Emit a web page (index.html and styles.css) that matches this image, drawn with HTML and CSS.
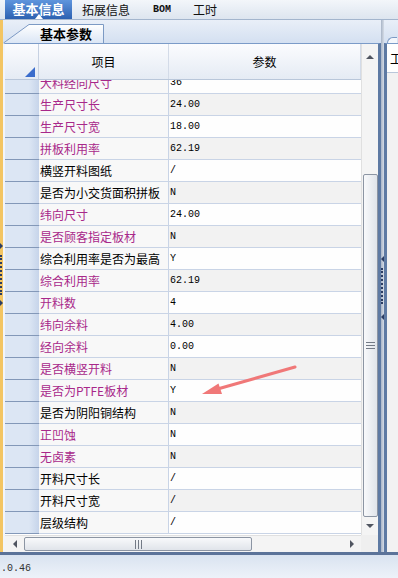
FILE: index.html
```html
<!DOCTYPE html>
<html lang="zh">
<head>
  <meta charset="UTF-8" />
  <title>基本信息</title>
  <link rel="stylesheet" href="styles.css">
</head>
<body>

  <!-- top tabs -->
  <div class="tabbar">
    <div class="tab active">基本信息</div>
    <div class="tab">拓展信息</div>
    <div class="tab bom">BOM</div>
    <div class="tab">工时</div>
  </div>

  <div class="main">
    <div class="edge">
      <span class="tri-r"></span>
      <span class="dots"></span>
      <span class="tri-r"></span>
    </div>

    <div class="panel">
      <div class="subtabs">
        <div class="subtab">
          <svg width="101" height="20" viewBox="0 0 101 20">
            <defs>
              <linearGradient id="tabg" x1="0" y1="0" x2="0" y2="1">
                <stop offset="0" stop-color="#ffffff"/>
                <stop offset="1" stop-color="#dbe6f5"/>
              </linearGradient>
            </defs>
            <path d="M0.5 20 L26 1.5 L100.5 1.5 L100.5 20" fill="url(#tabg)" stroke="#7c9ac4"/>
          </svg>
          <span>基本参数</span>
        </div>
      </div>

      <div class="grid">
        <div class="upper">
          <div class="table">
            <div class="head">
              <div class="sel"><span class="corner-tri"></span></div>
              <div class="hcell">项目</div>
              <div class="hcell">参数</div>
            </div>
            <div class="rows">
              <div class="row"><div class="sel"></div><div class="item hl">大料经向尺寸</div><div class="val">36</div></div>
              <div class="row"><div class="sel"></div><div class="item hl">生产尺寸长</div><div class="val">24.00</div></div>
              <div class="row"><div class="sel"></div><div class="item hl">生产尺寸宽</div><div class="val">18.00</div></div>
              <div class="row"><div class="sel"></div><div class="item hl">拼板利用率</div><div class="val">62.19</div></div>
              <div class="row"><div class="sel"></div><div class="item">横竖开料图纸</div><div class="val">/</div></div>
              <div class="row"><div class="sel"></div><div class="item">是否为小交货面积拼板</div><div class="val">N</div></div>
              <div class="row"><div class="sel"></div><div class="item hl">纬向尺寸</div><div class="val">24.00</div></div>
              <div class="row"><div class="sel"></div><div class="item hl">是否顾客指定板材</div><div class="val">N</div></div>
              <div class="row"><div class="sel"></div><div class="item">综合利用率是否为最高</div><div class="val">Y</div></div>
              <div class="row"><div class="sel"></div><div class="item hl">综合利用率</div><div class="val">62.19</div></div>
              <div class="row"><div class="sel"></div><div class="item hl">开料数</div><div class="val">4</div></div>
              <div class="row"><div class="sel"></div><div class="item hl">纬向余料</div><div class="val">4.00</div></div>
              <div class="row"><div class="sel"></div><div class="item hl">经向余料</div><div class="val">0.00</div></div>
              <div class="row"><div class="sel"></div><div class="item hl">是否横竖开料</div><div class="val">N</div></div>
              <div class="row"><div class="sel"></div><div class="item hl">是否为PTFE板材</div><div class="val">Y</div></div>
              <div class="row"><div class="sel"></div><div class="item">是否为阴阳铜结构</div><div class="val">N</div></div>
              <div class="row"><div class="sel"></div><div class="item hl">正凹蚀</div><div class="val">N</div></div>
              <div class="row"><div class="sel"></div><div class="item hl">无卤素</div><div class="val">N</div></div>
              <div class="row"><div class="sel"></div><div class="item">开料尺寸长</div><div class="val">/</div></div>
              <div class="row"><div class="sel"></div><div class="item">开料尺寸宽</div><div class="val">/</div></div>
              <div class="row"><div class="sel"></div><div class="item">层级结构</div><div class="val">/</div></div>
            </div>
          </div>

          <div class="vscroll">
            <div class="vbtn up-btn"><span class="arr-up"></span></div>
            <div class="vthumb"><span class="vgrip"></span></div>
            <div class="vbtn down-btn"><span class="arr-down"></span></div>
          </div>
        </div>

        <div class="lower">
          <div class="hscroll">
            <div class="hbtn"><span class="arr-left"></span></div>
            <div class="hthumb"><span class="hgrip"></span></div>
            <div class="spacer"></div>
            <div class="hbtn right"><span class="arr-right"></span></div>
          </div>
          <div class="corner"></div>
        </div>
      </div>
    </div>

    <div class="splitter">
      <span class="tri-l"></span>
      <span class="dots"></span>
      <span class="tri-l"></span>
    </div>

    <div class="side">
      <div class="side-top"><span class="side-tab"></span></div>
      <div class="side-body">
        <div class="side-head">工</div>
      </div>
    </div>
  </div>

  <div class="status">.0.46</div>

  <!-- annotation arrow drawn over the grid -->
  <svg class="mark" width="398" height="578" viewBox="0 0 398 578">
    <line x1="295" y1="367" x2="214" y2="390" stroke="#f07878" stroke-width="3" stroke-linecap="round"/>
    <polygon points="202,394 218.5,383.5 222,394" fill="#f07878"/>
  </svg>

</body>
</html>
```

FILE: styles.css
```css
* {
  box-sizing: border-box;
}

body {
  margin: 0;
  width: 398px;
  height: 578px;
  overflow: hidden;
  position: relative;
  font-family: "Noto Sans CJK SC", sans-serif;
  font-size: 12px;
  background: #f0f0f0;
  color: #111;
}

/* top tabs */
.tabbar {
  height: 20px;
  display: flex;
  background: linear-gradient(#f3f6fa, #dde5ef);
  border-bottom: 1px solid #a3b5cd;
}
.tab {
  display: flex;
  align-items: center;
  padding: 0 10px;
  line-height: 1;
  white-space: nowrap;
}
.tab.active {
  position: relative;
  margin-left: 5px;
  width: 67px;
  padding: 0 0 2px 0;
  justify-content: center;
  color: #fff;
  font-weight: bold;
  font-size: 13px;
  background: linear-gradient(#5f95dd, #2c61b1);
}
.tab.active::after {
  content: '';
  position: absolute;
  left: 30px;
  bottom: 0;
  border-left: 4px solid transparent;
  border-right: 4px solid transparent;
  border-bottom: 5px solid #fff;
}
.tab.bom {
  font-family: "Liberation Mono", monospace;
  font-size: 10px;
  font-weight: bold;
  padding: 0 12px 0 13px;
}

.main {
  display: flex;
  height: 532px;
}

/* golden left strip */
.edge {
  width: 4px;
  background: #f3c563;
  display: flex;
  flex-direction: column;
  padding-top: 223px;
}
.tri-r {
  width: 0;
  height: 0;
  border-left: 3px solid #2b3d63;
  border-top: 3px solid transparent;
  border-bottom: 3px solid transparent;
}
.edge .dots {
  width: 2px;
  height: 40px;
  margin: 6px 0 5px 0;
  border-left: 2px dotted #2b3d63;
}

/* main panel */
.panel {
  width: 378px;
  display: flex;
  flex-direction: column;
}
.subtabs {
  height: 23px;
  display: flex;
  align-items: flex-end;
  background: linear-gradient(#e9eff8, #d4e0f1);
}
.subtab {
  position: relative;
  width: 101px;
  height: 20px;
  display: flex;
  align-items: center;
  padding-left: 37px;
  font-weight: bold;
  font-size: 13px;
  color: #000;
}
.subtab svg {
  position: absolute;
  left: 0;
  top: 0;
}
.subtab span {
  position: relative;
}

.grid {
  flex: 1;
  display: flex;
  flex-direction: column;
  border-top: 1px solid #7b9bc8;
  border-left: 2px solid #f2f5fa;
  border-right: 3px solid #5e7aa3;
}
.upper {
  height: 491px;
  display: flex;
}
.table {
  width: 356px;
  display: flex;
  flex-direction: column;
}

.head {
  height: 36px;
  display: grid;
  grid-template-columns: 34px 130px 192px;
  background: linear-gradient(#fbfcfe, #e5ebf4);
  border-bottom: 1px solid #b9c7da;
}
.head .sel {
  display: flex;
  align-items: flex-end;
  justify-content: flex-end;
  padding: 0 3px 2px 0;
  border-right: 1px solid #c6d1e2;
}
.corner-tri {
  width: 0;
  height: 0;
  border-left: 10px solid transparent;
  border-bottom: 10px solid #3b6dcc;
}
.hcell {
  display: flex;
  align-items: center;
  justify-content: center;
  border-right: 1px solid #d3dbe8;
  color: #000;
}

.rows {
  flex: 1;
  overflow: hidden;
  background: #fff;
}
.row {
  display: grid;
  grid-template-columns: 34px 130px 192px;
  height: 22px;
}
.row:first-child {
  margin-top: -8px;
}
.row .sel {
  background: linear-gradient(to right, #dce6f4 70%, #c6d4ea);
  border-bottom: 1px solid #8398b8;
}
.item {
  background: #f8f8f8;
  border-right: 1px solid #c9d4e6;
  border-bottom: 1px solid #c9d4e6;
  padding-left: 1px;
  line-height: 21px;
  white-space: nowrap;
  overflow: hidden;
  color: #000;
}
.item.hl {
  color: #a8288a;
}
.val {
  background: #fefefe;
  border-bottom: 1px solid #c9d4e6;
  padding-left: 1px;
  line-height: 21px;
  font-family: "Liberation Mono", monospace;
  font-size: 10px;
  color: #000;
}
.row:nth-child(even) .val {
  background: #f2f2f2;
}

/* scrollbars */
.vscroll {
  width: 17px;
  display: flex;
  flex-direction: column;
  align-items: center;
  background: #f4f4f4;
  border-left: 1px solid #e0e0e0;
}
.vbtn {
  display: flex;
  align-items: center;
  justify-content: center;
}
.up-btn {
  height: 26px;
}
.down-btn {
  flex: 1;
}
.arr-up {
  border-left: 4px solid transparent;
  border-right: 4px solid transparent;
  border-bottom: 4px solid #505560;
}
.arr-down {
  border-left: 4px solid transparent;
  border-right: 4px solid transparent;
  border-top: 4px solid #505560;
}
.vthumb {
  width: 15px;
  height: 343px;
  margin-top: 104px;
  border: 1px solid #8c95a3;
  border-radius: 2px;
  background: linear-gradient(to right, #f8f9fb, #e0e4ea);
  display: flex;
  align-items: center;
  justify-content: center;
}
.vgrip {
  width: 9px;
  height: 7px;
  background: repeating-linear-gradient(#737a86 0 1px, transparent 1px 3px);
}

.lower {
  height: 17px;
  display: flex;
}
.hscroll {
  width: 356px;
  display: flex;
  align-items: center;
  background: #f4f4f4;
  border-top: 1px solid #e0e0e0;
}
.hbtn {
  width: 19px;
  display: flex;
  justify-content: center;
}
.hbtn.right {
  width: 18px;
}
.arr-left {
  border-top: 4px solid transparent;
  border-bottom: 4px solid transparent;
  border-right: 4px solid #505560;
}
.arr-right {
  border-top: 4px solid transparent;
  border-bottom: 4px solid transparent;
  border-left: 4px solid #505560;
}
.hthumb {
  width: 228px;
  height: 14px;
  border: 1px solid #8c95a3;
  border-radius: 2px;
  background: linear-gradient(#f8f9fb, #e0e4ea);
  display: flex;
  align-items: center;
  justify-content: center;
}
.hgrip {
  width: 7px;
  height: 9px;
  background: repeating-linear-gradient(to right, #737a86 0 1px, transparent 1px 3px);
}
.spacer {
  flex: 1;
}
.corner {
  width: 17px;
  background: #efefef;
}

/* splitter + right panel */
.splitter {
  width: 4px;
  background: linear-gradient(to right, #a8b4c6, #d5dce6);
  display: flex;
  flex-direction: column;
  align-items: flex-end;
  padding-top: 236px;
}
.tri-l {
  width: 0;
  height: 0;
  border-right: 3px solid #2b3d63;
  border-top: 3px solid transparent;
  border-bottom: 3px solid transparent;
}
.splitter .dots {
  width: 2px;
  height: 36px;
  margin: 6px 1px 10px 0;
  border-left: 2px dotted #2b3d63;
}

.side {
  flex: 1;
  display: flex;
  flex-direction: column;
}
.side-top {
  height: 23px;
  display: flex;
  align-items: flex-end;
  background: linear-gradient(#e9eff8, #d4e0f1);
}
.side-tab {
  width: 10px;
  height: 6px;
  margin-left: 3px;
  border-top: 1px solid #7c9ac4;
  border-left: 1px solid #7c9ac4;
  border-top-left-radius: 6px;
  background: #f4f7fc;
}
.side-body {
  flex: 1;
  border-top: 1px solid #7b9bc8;
  border-left: 3px solid #5e7aa3;
  background: #f2f2f2;
}
.side-head {
  height: 29px;
  line-height: 29px;
  padding-left: 3px;
  background: #fff;
  border-bottom: 1px solid #b9c7da;
  white-space: nowrap;
  overflow: hidden;
  color: #000;
}

/* status line */
.status {
  height: 26px;
  border-top: 3px solid #5b7399;
  background: linear-gradient(#d9e3f0, #edf2f9);
  padding: 4px 0 0 1px;
  display: flex;
  align-items: center;
  font-family: "Liberation Mono", monospace;
  font-size: 10px;
  color: #333;
}

.mark {
  position: absolute;
  left: 0;
  top: 0;
  pointer-events: none;
}
```
